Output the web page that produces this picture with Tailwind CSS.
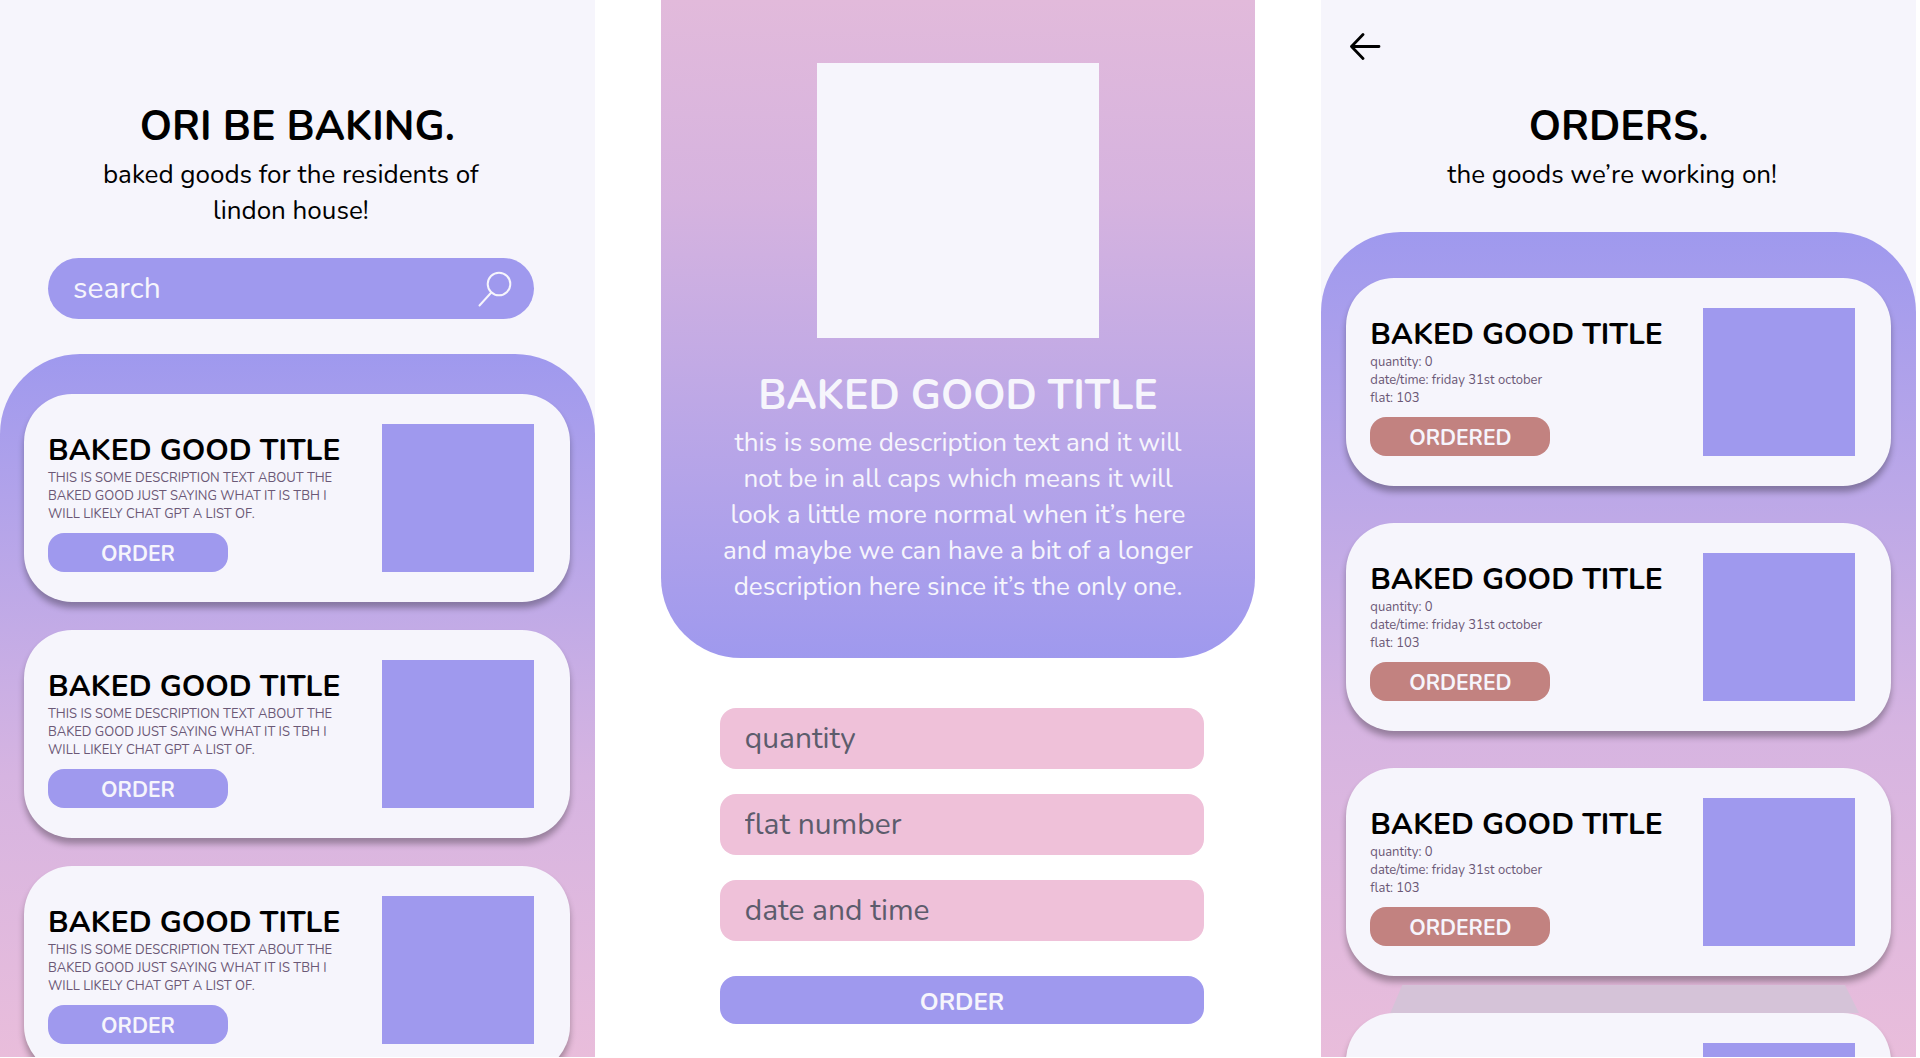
<!DOCTYPE html>
<html lang="en">
<head>
    <meta charset="UTF-8">
    <meta name="viewport" content="width=device-width, initial-scale=1.0">
    <title>Ori Be Baking</title>
    <script src="https://cdn.jsdelivr.net/npm/@tailwindcss/browser@4"></script>
</head>
<body class="bg-white font-['Nunito',Lato,sans-serif] text-black">
    <main class="grid grid-cols-3 gap-[66px] h-screen pr-1 pb-px overflow-hidden">

        <!-- home -->
        <section class="flex flex-col min-h-0 overflow-hidden bg-[#f6f5fc]">
            <header class="pt-[99px] text-center">
                <h1 class="text-[41px] leading-[56px] font-bold">ORI BE BAKING.</h1>
                <p class="mt-0.5 pl-16 pr-[77px] text-[26px] leading-9">baked goods for the residents of lindon house!</p>
            </header>

            <!-- searchbar -->
            <form class="flex items-center shrink-0 h-[61px] mt-[29px] ml-12 mr-[61px] pl-[25px] pr-[22px] rounded-full bg-[#9f99ee]">
                <label for="search" class="sr-only">search</label>
                <input type="text" id="search" placeholder="search" class="grow min-w-0 h-full outline-none text-[30px] text-[#f6f5fc] placeholder:text-[#f6f5fc]">
                <button type="submit" aria-label="search">
                    <svg class="size-9" viewBox="0 0 36 36" fill="none" stroke="#f6f5fc" stroke-width="2" stroke-linecap="round">
                        <circle cx="23" cy="13" r="11.3"/>
                        <path d="M15.3 21.5 3.5 34.5"/>
                    </svg>
                </button>
            </form>

            <div class="grow min-h-0 mt-[35px] pt-10 pl-6 pr-[25px] space-y-7 overflow-hidden rounded-t-[80px] bg-linear-to-b from-[#9f99ee] via-[#d6b4e1] via-60% to-[#e9bddb]">
                <article class="flex justify-between gap-8 py-[30px] pl-6 pr-9 rounded-[48px] bg-[#f6f5fc] shadow-[0_6px_6px_rgba(0,0,0,0.3)]">
                    <div class="flex flex-col items-start justify-end">
                        <h2 class="text-[30px] leading-9 font-bold">BAKED GOOD TITLE</h2>
                        <p class="text-[13px] leading-[18px] text-[#6b5876]">THIS IS SOME DESCRIPTION TEXT ABOUT THE BAKED GOOD JUST SAYING WHAT IT IS TBH I WILL LIKELY CHAT GPT A LIST OF.</p>
                        <button class="w-[180px] h-[39px] mt-[10px] pt-1 rounded-2xl bg-[#9f99ee] text-[21px] font-bold text-[#f6f5fc]">ORDER</button>
                    </div>
                    <div class="shrink-0 w-[152px] h-[148px] bg-[#9f99ee]"></div>
                </article>

                <article class="flex justify-between gap-8 py-[30px] pl-6 pr-9 rounded-[48px] bg-[#f6f5fc] shadow-[0_6px_6px_rgba(0,0,0,0.3)]">
                    <div class="flex flex-col items-start justify-end">
                        <h2 class="text-[30px] leading-9 font-bold">BAKED GOOD TITLE</h2>
                        <p class="text-[13px] leading-[18px] text-[#6b5876]">THIS IS SOME DESCRIPTION TEXT ABOUT THE BAKED GOOD JUST SAYING WHAT IT IS TBH I WILL LIKELY CHAT GPT A LIST OF.</p>
                        <button class="w-[180px] h-[39px] mt-[10px] pt-1 rounded-2xl bg-[#9f99ee] text-[21px] font-bold text-[#f6f5fc]">ORDER</button>
                    </div>
                    <div class="shrink-0 w-[152px] h-[148px] bg-[#9f99ee]"></div>
                </article>

                <article class="flex justify-between gap-8 py-[30px] pl-6 pr-9 rounded-[48px] bg-[#f6f5fc] shadow-[0_6px_6px_rgba(0,0,0,0.3)]">
                    <div class="flex flex-col items-start justify-end">
                        <h2 class="text-[30px] leading-9 font-bold">BAKED GOOD TITLE</h2>
                        <p class="text-[13px] leading-[18px] text-[#6b5876]">THIS IS SOME DESCRIPTION TEXT ABOUT THE BAKED GOOD JUST SAYING WHAT IT IS TBH I WILL LIKELY CHAT GPT A LIST OF.</p>
                        <button class="w-[180px] h-[39px] mt-[10px] pt-1 rounded-2xl bg-[#9f99ee] text-[21px] font-bold text-[#f6f5fc]">ORDER</button>
                    </div>
                    <div class="shrink-0 w-[152px] h-[148px] bg-[#9f99ee]"></div>
                </article>
            </div>
        </section>

        <!-- order form -->
        <section class="min-h-0 overflow-hidden">
            <div class="pt-[63px] pb-[53px] px-[57px] rounded-b-[80px] text-center text-[#f6f5fc] bg-linear-to-t from-[#9f99ee] via-[#d6b3df] via-70% to-[#e2badb]">
                <div class="w-[282px] h-[275px] mx-auto bg-[#f6f5fc]"></div>
                <h2 class="mt-[30px] text-[41px] leading-[56px] font-bold">BAKED GOOD TITLE</h2>
                <p class="mt-px text-[26px] leading-9">this is some description text and it will not be in all caps which means it will look a little more normal when it’s here and maybe we can have a bit of a longer description here since it’s the only one.</p>
            </div>

            <form class="flex flex-col gap-[25px] pt-[50px] pl-[59px] pr-[51px]">
                <label for="quantity" class="sr-only">quantity</label>
                <input type="text" id="quantity" placeholder="quantity" class="h-[61px] px-[25px] rounded-2xl bg-[#efc1d9] text-[30px] text-[#5c5c6c] placeholder:text-[#5c5c6c] outline-none">
                <label for="flat" class="sr-only">flat number</label>
                <input type="text" id="flat" placeholder="flat number" class="h-[61px] px-[25px] rounded-2xl bg-[#efc1d9] text-[30px] text-[#5c5c6c] placeholder:text-[#5c5c6c] outline-none">
                <label for="date" class="sr-only">date and time</label>
                <input type="text" id="date" placeholder="date and time" class="h-[61px] px-[25px] rounded-2xl bg-[#efc1d9] text-[30px] text-[#5c5c6c] placeholder:text-[#5c5c6c] outline-none">
                <button type="submit" class="h-12 mt-[10px] pt-1 rounded-2xl bg-[#9f99ee] text-[24px] font-bold text-[#f6f5fc]">ORDER</button>
            </form>
        </section>

        <!-- orders list -->
        <section class="flex flex-col min-h-0 overflow-hidden bg-[#f6f5fc]">
            <nav class="shrink-0 h-[99px] pt-8 pl-7">
                <a href="#" aria-label="back" class="inline-block">
                    <svg class="w-8 h-7" viewBox="0 0 32 28" fill="none" stroke="#000" stroke-width="2.8" stroke-linecap="round" stroke-linejoin="round">
                        <path d="M14 2.5 2.5 14.5 14 26.5M2.5 14.5H30"/>
                    </svg>
                </a>
            </nav>
            <header class="text-center">
                <h1 class="text-[41px] leading-[56px] font-bold">ORDERS.</h1>
                <p class="mt-0.5 pl-16 pr-[77px] text-[26px] leading-9">the goods we’re working on!</p>
            </header>

            <div class="grow min-h-0 mt-[39px] pt-[46px] px-[25px] space-y-[37px] overflow-hidden rounded-t-[80px] bg-linear-to-b from-[#9f99ee] via-[#d6b4e1] via-60% to-[#e9bddb]">
                <article class="flex justify-between gap-8 py-[30px] pl-6 pr-9 rounded-[48px] bg-[#f6f5fc] shadow-[0_6px_6px_rgba(0,0,0,0.3)]">
                    <div class="flex flex-col items-start justify-end">
                        <h2 class="text-[30px] leading-9 font-bold">BAKED GOOD TITLE</h2>
                        <p class="text-[13px] leading-[18px] text-[#6b5876]">quantity: 0<br>date/time: friday 31st october<br>flat: 103</p>
                        <button class="w-[180px] h-[39px] mt-[10px] pt-1 rounded-2xl bg-[#c28280] text-[21px] font-bold text-[#f6f5fc]">ORDERED</button>
                    </div>
                    <div class="shrink-0 w-[152px] h-[148px] bg-[#9f99ee]"></div>
                </article>

                <article class="flex justify-between gap-8 py-[30px] pl-6 pr-9 rounded-[48px] bg-[#f6f5fc] shadow-[0_6px_6px_rgba(0,0,0,0.3)]">
                    <div class="flex flex-col items-start justify-end">
                        <h2 class="text-[30px] leading-9 font-bold">BAKED GOOD TITLE</h2>
                        <p class="text-[13px] leading-[18px] text-[#6b5876]">quantity: 0<br>date/time: friday 31st october<br>flat: 103</p>
                        <button class="w-[180px] h-[39px] mt-[10px] pt-1 rounded-2xl bg-[#c28280] text-[21px] font-bold text-[#f6f5fc]">ORDERED</button>
                    </div>
                    <div class="shrink-0 w-[152px] h-[148px] bg-[#9f99ee]"></div>
                </article>

                <article class="flex justify-between gap-8 py-[30px] pl-6 pr-9 rounded-[48px] bg-[#f6f5fc] shadow-[0_6px_6px_rgba(0,0,0,0.3)]">
                    <div class="flex flex-col items-start justify-end">
                        <h2 class="text-[30px] leading-9 font-bold">BAKED GOOD TITLE</h2>
                        <p class="text-[13px] leading-[18px] text-[#6b5876]">quantity: 0<br>date/time: friday 31st october<br>flat: 103</p>
                        <button class="w-[180px] h-[39px] mt-[10px] pt-1 rounded-2xl bg-[#c28280] text-[21px] font-bold text-[#f6f5fc]">ORDERED</button>
                    </div>
                    <div class="shrink-0 w-[152px] h-[148px] bg-[#9f99ee]"></div>
                </article>

                <article class="relative flex justify-between gap-8 py-[30px] pl-6 pr-9 rounded-[48px] bg-[#f6f5fc] shadow-[0_6px_6px_rgba(0,0,0,0.3)]">
                    <!-- haze between the last two cards -->
                    <div class="absolute bottom-full left-11 right-8 h-7 bg-[#d5c3d8] [clip-path:polygon(12px_0,97%_0,100%_100%,0_100%)]"></div>
                    <div class="flex flex-col items-start justify-end">
                        <h2 class="text-[30px] leading-9 font-bold">BAKED GOOD TITLE</h2>
                        <p class="text-[13px] leading-[18px] text-[#6b5876]">quantity: 0<br>date/time: friday 31st october<br>flat: 103</p>
                        <button class="w-[180px] h-[39px] mt-[10px] pt-1 rounded-2xl bg-[#c28280] text-[21px] font-bold text-[#f6f5fc]">ORDERED</button>
                    </div>
                    <div class="shrink-0 w-[152px] h-[148px] bg-[#9f99ee]"></div>
                </article>
            </div>
        </section>

    </main>
</body>
</html>
